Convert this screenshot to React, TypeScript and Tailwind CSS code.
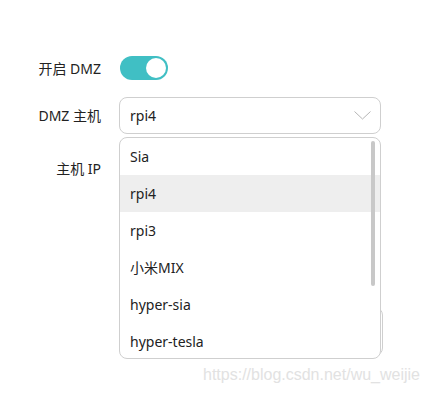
const hosts = ["Sia", "rpi4", "rpi3", "小米MIX", "hyper-sia", "hyper-tesla"]

export default function App() {
  return (
    <div
      className="relative w-[429px] h-[393px] overflow-hidden bg-white text-[14px] text-[#222]"
      style={{ fontFamily: '"Noto Sans", "Noto Sans CJK SC", sans-serif' }}
    >
      <div className="flex flex-col pt-[56px]">
        <div className="flex items-center h-[24px]">
          <div className="w-[101px] text-right">开启 DMZ</div>
          <div className="ml-[19px] relative w-[48px] h-[24px] rounded-full bg-[#40bfc4]">
            <div className="absolute right-[2px] top-[2px] w-[20px] h-[20px] rounded-full bg-white" />
          </div>
        </div>

        <div className="flex items-center mt-[17px] h-[37px]">
          <div className="w-[101px] text-right">DMZ 主机</div>
          <div className="ml-[18px] w-[262px] h-[37px] flex items-center justify-between pl-[10px] pr-[9px] border border-[#cfcfcf] rounded-[8px]">
            <span>rpi4</span>
            <svg width="17" height="9" viewBox="0 0 17 9" fill="none">
              <polyline points="0.5,0.5 8.5,8 16.5,0.5" stroke="#b5b5b5" strokeWidth="1" />
            </svg>
          </div>
        </div>

        <div className="flex items-center mt-[16px] h-[37px]">
          <div className="w-[101px] text-right">主机 IP</div>
          <div className="ml-[18px] w-[262px] h-[37px] border border-[#cfcfcf] rounded-[8px]" />
        </div>

        <div className="flex mt-[120px]">
          <div className="ml-[119px] w-[264px] h-[49px] border border-[#cfcfcf] rounded-[8px]" />
        </div>
      </div>

      <div className="absolute left-[119px] top-[137px] w-[262px] h-[222px] bg-white border border-[#cfcfcf] rounded-[8px] overflow-hidden">
        {hosts.map((h) => (
          <div
            key={h}
            className={`h-[37px] flex items-center pl-[10px] ${h === "rpi4" ? "bg-[#eeeeee]" : ""}`}
          >
            {h}
          </div>
        ))}
        <div className="absolute right-[5px] top-[3px] w-[4px] h-[145px] rounded-full bg-[#c8c8c8]" />
      </div>

      <div
        className="absolute left-[203px] top-[363px] text-[16px] text-[#e2e2e2]"
        style={{ fontFamily: '"Liberation Sans", Arial, sans-serif' }}
      >
        https://blog.csdn.net/wu_weijie
      </div>
    </div>
  )
}
